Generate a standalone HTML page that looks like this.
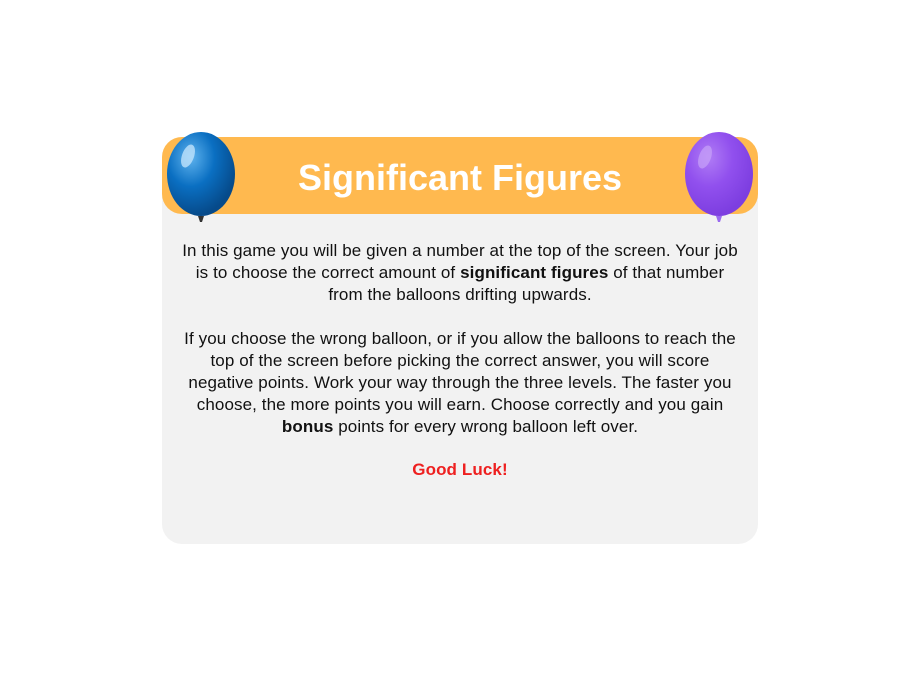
<!DOCTYPE html>
<html><head><style>
html,body{margin:0;padding:0;background:#fff;width:900px;height:700px;overflow:hidden;font-family:"Liberation Sans",sans-serif;}
.card{position:absolute;left:162px;top:137px;width:596px;height:407px;background:#f2f2f2;border-radius:20px;}
.head{position:absolute;left:162px;top:137px;width:596px;height:77px;background:#ffb94f;border-radius:20px;}
.title{position:absolute;left:162px;width:596px;top:154px;text-align:center;color:#fff;font-weight:bold;font-size:36px;line-height:48px;}
.txt{position:absolute;left:162px;width:596px;text-align:center;font-size:17px;line-height:22px;color:#111;white-space:nowrap;letter-spacing:0.1px;}
.good{color:#ee2020;font-weight:bold;}
</style></head><body>
<div class="card"></div>
<div class="head"></div>
<div class="title">Significant Figures</div>
<svg style="position:absolute;left:160px;top:128px" width="84" height="100">
<defs><radialGradient id="b" cx="35%" cy="30%" r="70%"><stop offset="0" stop-color="#5fb3ee"/><stop offset="0.5" stop-color="#0a6fc2"/><stop offset="1" stop-color="#064a8a"/></radialGradient>
<radialGradient id="p" cx="35%" cy="30%" r="70%"><stop offset="0" stop-color="#b07cf5"/><stop offset="0.5" stop-color="#9150ee"/><stop offset="1" stop-color="#7d3ee0"/></radialGradient></defs>
<ellipse cx="41" cy="46" rx="34" ry="42" fill="url(#b)"/>
<ellipse cx="28" cy="28" rx="6" ry="12" fill="#bfe2fb" opacity="0.8" transform="rotate(20 28 28)"/>
<path d="M38 88 L44 88 L42 94 L40 94Z" fill="#333"/>
</svg>
<svg style="position:absolute;left:680px;top:127px" width="80" height="100">
<ellipse cx="39" cy="47" rx="34" ry="42" fill="url(#p)"/>
<ellipse cx="25" cy="30" rx="6" ry="12" fill="#c7a3f8" opacity="0.7" transform="rotate(20 25 30)"/>
<path d="M36 89 L42 89 L40 95 L38 95Z" fill="#9a6af0"/>
</svg>
<div class="txt" style="top:240px">In this game you will be given a number at the top of the screen. Your job<br>is to choose the correct amount of <b>significant figures</b> of that number<br>from the balloons drifting upwards.</div>
<div class="txt" style="top:328px">If you choose the wrong balloon, or if you allow the balloons to reach the<br>top of the screen before picking the correct answer, you will score<br>negative points. Work your way through the three levels. The faster you<br>choose, the more points you will earn. Choose correctly and you gain<br><b>bonus</b> points for every wrong balloon left over.</div>
<div class="txt good" style="top:459px">Good Luck!</div>
</body></html>
